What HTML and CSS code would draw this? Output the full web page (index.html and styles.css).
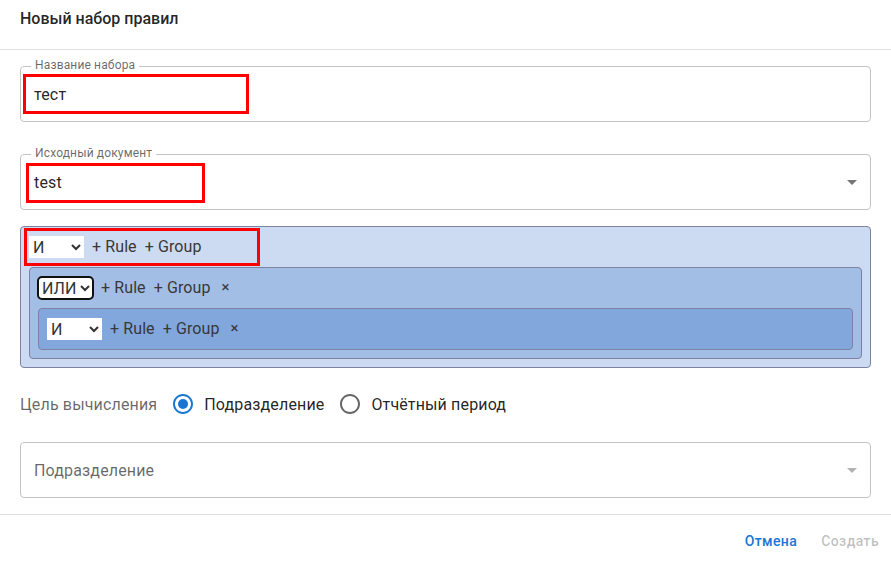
FILE: index.html
```html
<!DOCTYPE html>
<html lang="ru">
<head>
    <meta charset="UTF-8">
    <meta name="viewport" content="width=device-width, initial-scale=1.0">
    <title>Новый набор правил</title>
    <link rel="stylesheet" href="styles.css">
</head>
<body>
    <div class="dialog">
        <header class="dialog-title">Новый набор правил</header>

        <div class="dialog-content">
            <!-- Название -->
            <div class="field">
                <span class="field-label">Название набора</span>
                <span class="field-value">тест</span>
                <span class="mark mark-name"></span>
            </div>

            <!-- Исходный документ -->
            <div class="field field-select">
                <span class="field-label">Исходный документ</span>
                <span class="field-value">test</span>
                <svg class="arrow" viewBox="0 0 24 24" width="24" height="24"><path d="M7 10l5 5 5-5z"/></svg>
                <span class="mark mark-doc"></span>
            </div>

            <!-- Конструктор правил -->
            <div class="rule-group qb">
                <div class="rg-header">
                    <select class="combinator"><option>И</option><option>ИЛИ</option></select>
                    <button class="rg-btn">+ Rule</button>
                    <button class="rg-btn">+ Group</button>
                </div>
                <div class="rule-group">
                    <div class="rg-header">
                        <select class="combinator focused"><option>ИЛИ</option><option>И</option></select>
                        <button class="rg-btn">+ Rule</button>
                        <button class="rg-btn">+ Group</button>
                        <button class="rg-btn rg-remove">×</button>
                    </div>
                    <div class="rule-group">
                        <div class="rg-header">
                            <select class="combinator"><option>И</option><option>ИЛИ</option></select>
                            <button class="rg-btn">+ Rule</button>
                            <button class="rg-btn">+ Group</button>
                            <button class="rg-btn rg-remove">×</button>
                        </div>
                    </div>
                </div>
                <span class="mark mark-qb"></span>
            </div>

            <!-- Цель вычисления -->
            <div class="radio-row">
                <span class="radio-title">Цель вычисления</span>
                <label class="radio-option">
                    <span class="radio-icon checked">
                        <svg viewBox="0 0 24 24" width="24" height="24"><path d="M12 2C6.48 2 2 6.48 2 12s4.48 10 10 10 10-4.48 10-10S17.52 2 12 2zm0 18c-4.42 0-8-3.58-8-8s3.58-8 8-8 8 3.58 8 8-3.58 8-8 8z"/><circle cx="12" cy="12" r="5"/></svg>
                    </span>
                    <span>Подразделение</span>
                </label>
                <label class="radio-option">
                    <span class="radio-icon">
                        <svg viewBox="0 0 24 24" width="24" height="24"><path d="M12 2C6.48 2 2 6.48 2 12s4.48 10 10 10 10-4.48 10-10S17.52 2 12 2zm0 18c-4.42 0-8-3.58-8-8s3.58-8 8-8 8 3.58 8 8-3.58 8-8 8z"/></svg>
                    </span>
                    <span>Отчётный период</span>
                </label>
            </div>

            <!-- Подразделение -->
            <div class="field field-select">
                <span class="field-value placeholder">Подразделение</span>
                <svg class="arrow arrow-light" viewBox="0 0 24 24" width="24" height="24"><path d="M7 10l5 5 5-5z"/></svg>
            </div>
        </div>

        <div class="dialog-actions">
            <button class="text-btn primary">Отмена</button>
            <button class="text-btn" disabled>Создать</button>
        </div>
    </div>
</body>
</html>
```

FILE: styles.css
```css
body {
    margin: 0;
    font-family: Roboto, "Liberation Sans", sans-serif;
    color: rgba(0, 0, 0, 0.87);
    background: #fff;
}
.dialog-title {
    font-size: 16px;
    font-weight: 500;
    line-height: 20px;
    padding: 9px 20px 20px;
    border-bottom: 1px solid #e0e0e0;
}
.dialog-content {
    display: flex;
    flex-direction: column;
    padding: 16px 20px;
    border-bottom: 1px solid #e0e0e0;
}
.field {
    position: relative;
    display: flex;
    align-items: center;
    height: 56px;
    box-sizing: border-box;
    padding: 0 13px;
    border: 1px solid #c4c4c4;
    border-radius: 4px;
    font-size: 16px;
    letter-spacing: 0.15px;
}
.field + .field {
    margin-top: 32px;
}
.field-select {
    padding-right: 6px;
}
.field-label {
    position: absolute;
    top: -9px;
    left: 10px;
    padding: 0 4px;
    background: #fff;
    font-size: 12px;
    line-height: 14px;
    color: rgba(0, 0, 0, 0.6);
}
.field-value {
    flex: 1;
}
.placeholder {
    color: rgba(0, 0, 0, 0.6);
}
.arrow {
    fill: rgba(0, 0, 0, 0.54);
}
.arrow-light {
    fill: rgba(0, 0, 0, 0.3);
}
/* red annotation boxes */
.mark {
    position: absolute;
    box-sizing: border-box;
    border: 3px solid #ff0000;
}
.mark-name {
    left: 2px;
    top: 7px;
    width: 226px;
    height: 40px;
}
.mark-doc {
    left: 5px;
    top: 8px;
    width: 179px;
    height: 40px;
}
.mark-qb {
    left: 3px;
    top: 1px;
    width: 236px;
    height: 38px;
}
.rule-group {
    position: relative;
    display: flex;
    flex-direction: column;
    gap: 8px;
    padding: 8px;
    border: 1px solid #7f81a2;
    border-radius: 4px;
    background: rgba(0, 75, 183, 0.2);
}
.qb {
    margin-top: 16px;
}
.rg-header {
    display: flex;
    align-items: center;
    gap: 8px;
    height: 24px;
}
.combinator {
    height: 22px;
    border: none;
    background: #fff;
    font-family: inherit;
    font-size: 16px;
    color: #333;
}
.combinator.focused {
    outline: 2px solid #101010;
    outline-offset: -1px;
    border-radius: 4px;
}
.rg-btn {
    padding: 0;
    margin-top: -2px;
    border: none;
    background: none;
    font-family: inherit;
    font-size: 16px;
    letter-spacing: 0.1px;
    color: #383838;
}
.rg-remove {
    margin-left: 3px;
    font-size: 15px;
}
.radio-row {
    display: flex;
    align-items: center;
    height: 42px;
    margin-top: 15px;
    margin-bottom: 1px;
    font-size: 16px;
    letter-spacing: 0.15px;
}
.radio-title {
    color: rgba(0, 0, 0, 0.6);
    margin-right: 5px;
}
.radio-option {
    display: flex;
    align-items: center;
    margin-right: 5px;
}
.radio-icon {
    display: flex;
    padding: 9px;
}
.radio-icon svg {
    fill: rgba(0, 0, 0, 0.6);
}
.radio-icon.checked svg {
    fill: #1976d2;
}
.radio-row + .field {
    margin-top: 16px;
}
.dialog-actions {
    display: flex;
    justify-content: flex-end;
    gap: 8px;
    padding: 8px 4px 8px 8px;
}
.text-btn {
    min-width: 64px;
    padding: 6px 8px;
    border: none;
    background: none;
    font-family: inherit;
    font-size: 14px;
    font-weight: 500;
    line-height: 24.5px;
    letter-spacing: 0.4px;
    color: rgba(0, 0, 0, 0.26);
}
.text-btn.primary {
    color: #1976d2;
}
```
